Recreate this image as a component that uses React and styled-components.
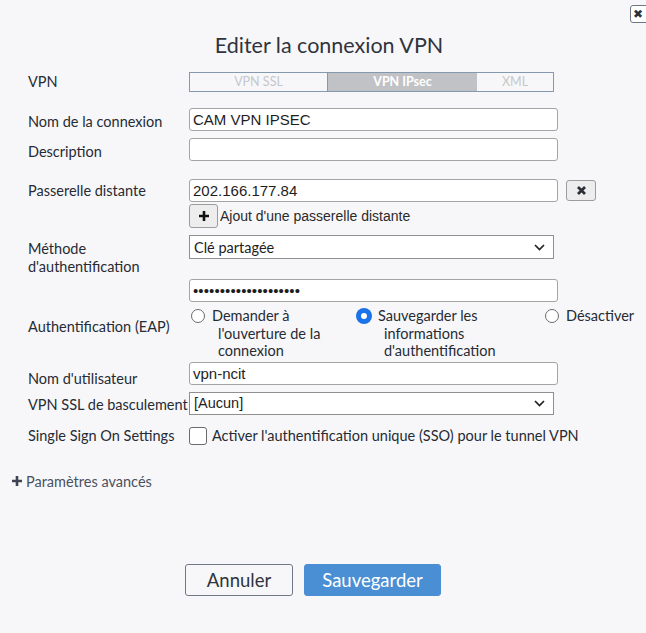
import React from "react";
import styled, { createGlobalStyle } from "styled-components";

const Global = createGlobalStyle`
  html, body { margin: 0; padding: 0; background: #f7f7f9; overflow: hidden; }
  body { font-family: Lato, "Liberation Sans", sans-serif; color: #2b303a; }
  * { box-sizing: border-box; }
`;

const Page = styled.div`
  width: 646px;
  height: 633px;
  display: flex;
  flex-direction: column;
`;

const TopBar = styled.div`
  display: flex;
  justify-content: flex-end;
  padding-top: 5px;
  height: 24px;
`;

const CloseBtn = styled.button`
  width: 22px;
  height: 18px;
  margin-right: -6px;
  border: 1px solid #6d7684;
  border-radius: 3px;
  background: #fff;
  color: #2a2f38;
  font-size: 12px;
  line-height: 14px;
  padding: 0 0 0 2px;
  text-align: left;
  font-family: "DejaVu Sans", sans-serif;
`;

const Title = styled.h1`
  margin: 8px 0 0 12px;
  font-size: 21.5px;
  font-weight: 400;
  line-height: 26px;
  text-align: center;
  color: #2f343d;
`;

const Form = styled.div`
  display: flex;
  flex-direction: column;
  padding-left: 28px;
`;

const Row = styled.div`
  display: flex;
  align-items: ${(p) => p.$align || "center"};
  margin-top: ${(p) => p.$mt || 0}px;
`;

const Label = styled.div`
  width: 161px;
  flex: none;
  font-size: 14.5px;
  line-height: 18px;
  color: #262b34;
  padding-top: ${(p) => p.$pt || 0}px;
`;

const Tabs = styled.div`
  display: flex;
  height: 20px;
`;

const Tab = styled.div`
  width: ${(p) => p.$w}px;
  height: 20px;
  border: 1px solid #8599ae;
  border-left-width: ${(p) => (p.$first ? 1 : 0)}px;
  border-right-width: ${(p) => (p.$active ? 0 : 1)}px;
  background: ${(p) => (p.$active ? "#c1c2c5" : "#f7f7f9")};
  color: ${(p) => (p.$active ? "#ffffff" : "#c5c7cc")};
  font-size: 12.5px;
  font-weight: ${(p) => (p.$active ? 700 : 400)};
  line-height: 18px;
  text-align: center;
`;

const TextInput = styled.div`
  width: 369px;
  height: 23px;
  border: 1px solid #a4a4a4;
  border-radius: 3px;
  background: #fff;
  font-family: "Liberation Sans", Arial, sans-serif;
  font-size: 15px;
  line-height: 21px;
  padding-left: 3px;
  color: #1e1e1e;
  letter-spacing: ${(p) => (p.$dots ? "0.1px" : "0")};
`;

const Select = styled.div`
  width: 365px;
  height: ${(p) => p.$h || 24}px;
  border: 1px solid #8f8f8f;
  background: #fff;
  display: flex;
  align-items: center;
  justify-content: space-between;
  padding: 0 8px 0 4px;
  font-family: ${(p) => (p.$arial ? '"Liberation Sans", Arial, sans-serif' : "Lato, sans-serif")};
  font-size: 14.5px;
  color: #1e1e1e;
`;

const Chevron = () => (
  <svg width="11" height="7" viewBox="0 0 11 7">
    <path d="M1 1l4.5 4.5L10 1" fill="none" stroke="#222" strokeWidth="1.7" />
  </svg>
);

const SmallBtn = styled.button`
  width: ${(p) => p.$w}px;
  height: ${(p) => p.$h}px;
  margin-left: ${(p) => p.$ml || 0}px;
  border: 1px solid #9c9c9c;
  border-radius: 3px;
  background: #ededed;
  padding: 0;
  display: flex;
  align-items: center;
  justify-content: center;
  color: #222;
`;

const AddText = styled.span`
  font-family: "Liberation Sans", Arial, sans-serif;
  font-size: 14px;
  color: #2a2a2a;
  margin-left: 2px;
  padding-top: 4px;
`;

const Radios = styled.div`
  display: grid;
  grid-template-columns: 166px 188px auto;
  padding-left: 2px;
`;

const RadioItem = styled.div`
  display: flex;
  align-items: flex-start;
`;

const RadioCircle = styled.span`
  width: 14px;
  height: 14px;
  flex: none;
  margin-top: 2px;
  border-radius: 50%;
  border: ${(p) => (p.$on ? "4px solid #1a73e8" : "1px solid #6b6b6b")};
  background: #fff;
  box-shadow: ${(p) => (p.$on ? "0 0 0 1px #1a73e8" : "none")};
`;

const RadioText = styled.div`
  margin-left: 7px;
  padding-left: 6px;
  text-indent: -6px;
  font-size: 14.5px;
  line-height: 17.5px;
  color: #262b34;
  width: ${(p) => p.$w}px;
`;

const Check = styled.span`
  width: 18px;
  height: 18px;
  flex: none;
  border: 1px solid #6b6b6b;
  border-radius: 3px;
  background: #fff;
`;

const CheckText = styled.span`
  margin-left: 5px;
  font-size: 14.5px;
  color: #262b34;
`;

const Advanced = styled.div`
  margin: 28px 0 0 11px;
  display: flex;
  align-items: center;
  gap: 3px;
  font-size: 14.5px;
  color: #4a5160;
`;

const Footer = styled.div`
  display: flex;
  gap: 11px;
  margin: 74px 0 0 185px;
`;

const Button = styled.button`
  height: 32px;
  width: ${(p) => p.$w}px;
  border-radius: 3px;
  font-family: Lato, sans-serif;
  font-size: 18.5px;
  border: 1px solid ${(p) => (p.$primary ? "#4a8fd3" : "#6f7886")};
  background: ${(p) => (p.$primary ? "#4a8fd3" : "#f7f7f9")};
  color: ${(p) => (p.$primary ? "#ffffff" : "#2f343d")};
`;

export default function App() {
  return (
    <Page>
      <Global />
      <TopBar>
        <CloseBtn>✖</CloseBtn>
      </TopBar>
      <Title>Editer la connexion VPN</Title>
      <Form>
        <Row $mt={14}>
          <Label>VPN</Label>
          <Tabs>
            <Tab $w={139} $first>VPN SSL</Tab>
            <Tab $w={149} $active>VPN IPsec</Tab>
            <Tab $w={77}>XML</Tab>
          </Tabs>
        </Row>
        <Row $mt={16}>
          <Label $pt={5}>Nom de la connexion</Label>
          <TextInput>CAM VPN IPSEC</TextInput>
        </Row>
        <Row $mt={7}>
          <Label $pt={5}>Description</Label>
          <TextInput />
        </Row>
        <Row $mt={18}>
          <Label $pt={1}>Passerelle distante</Label>
          <TextInput>202.166.177.84</TextInput>
          <SmallBtn $w={30} $h={21} $ml={8}>
            <svg width="11" height="11" viewBox="0 0 11 11">
              <path d="M2 2l7 7M9 2l-7 7" stroke="#2a2f38" strokeWidth="2.8" strokeLinecap="butt" />
            </svg>
          </SmallBtn>
        </Row>
        <Row $mt={2} $align="flex-start">
          <Label />
          <SmallBtn $w={29} $h={24}>
            <svg width="12" height="12" viewBox="0 0 12 12">
              <path d="M6 1v10M1 6h10" stroke="#111" strokeWidth="2.6" />
            </svg>
          </SmallBtn>
          <AddText>Ajout d'une passerelle distante</AddText>
        </Row>
        <Row $mt={7} $align="flex-start">
          <Label $pt={5}>
            Méthode
            <br />
            d'authentification
          </Label>
          <Select>
            Clé partagée
            <Chevron />
          </Select>
        </Row>
        <Row $mt={3}>
          <Label />
          <TextInput $dots>••••••••••••••••••••</TextInput>
        </Row>
        <Row $mt={5} $align="flex-start">
          <Label $pt={11}>Authentification (EAP)</Label>
          <Radios>
            <RadioItem>
              <RadioCircle />
              <RadioText $w={112}>Demander à l'ouverture de la connexion</RadioText>
            </RadioItem>
            <RadioItem>
              <RadioCircle $on />
              <RadioText $w={132}>Sauvegarder les informations d'authentification</RadioText>
            </RadioItem>
            <RadioItem>
              <RadioCircle />
              <RadioText $w={100}>Désactiver</RadioText>
            </RadioItem>
          </Radios>
        </Row>
        <Row $mt={2} $align="flex-start">
          <Label $pt={8}>Nom d'utilisateur</Label>
          <TextInput>vpn-ncit</TextInput>
        </Row>
        <Row $mt={4}>
          <Label $pt={3}>VPN SSL de basculement</Label>
          <Select $arial $h={23}>
            [Aucun]
            <Chevron />
          </Select>
        </Row>
        <Row $mt={12}>
          <Label>Single Sign On Settings</Label>
          <Check />
          <CheckText>Activer l'authentification unique (SSO) pour le tunnel VPN</CheckText>
        </Row>
      </Form>
      <Advanced>
        <svg width="12" height="12" viewBox="0 0 12 12">
          <path d="M6 1v10M1 6h10" stroke="#3e4452" strokeWidth="2.6" />
        </svg>
        Paramètres avancés
      </Advanced>
      <Footer>
        <Button $w={108}>Annuler</Button>
        <Button $w={137} $primary>Sauvegarder</Button>
      </Footer>
    </Page>
  );
}
